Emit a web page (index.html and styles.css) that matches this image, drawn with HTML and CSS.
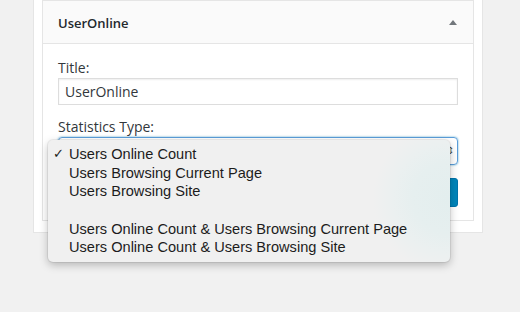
FILE: index.html
```html
<!DOCTYPE HTML>
<html>
<head>
<meta charset="utf-8">
<title>UserOnline widget</title>
<link rel="stylesheet" href="styles.css">
</head>

<body>
<div class="sidebar">
	<div class="widget">
		<div class="widget-top">
			<h3>UserOnline</h3>
			<span class="toggle"></span>
		</div>
		<div class="widget-inside">
			<label class="field-label">Title:</label>
			<div class="text-input">UserOnline</div>
			<label class="field-label stat-label">Statistics Type:</label>
			<div class="select-box"><span class="select-arrow">&#8661;</span></div>
			<div class="actions">
				<span class="save-btn"></span>
			</div>
		</div>
	</div>

	<ul class="dropdown">
		<li class="checked">Users Online Count</li>
		<li>Users Browsing Current Page</li>
		<li>Users Browsing Site</li>
		<li class="blank"></li>
		<li>Users Online Count &amp; Users Browsing Current Page</li>
		<li>Users Online Count &amp; Users Browsing Site</li>
	</ul>
</div>
</body>
</html>
```

FILE: styles.css
```css
* {margin:0; padding:0; box-sizing:border-box;}
li {list-style:none;}

body {background:#f1f1f1; font-family:"Open Sans", "Liberation Sans", sans-serif; color:#23282d; height:312px; overflow:hidden;}

.sidebar {position:relative; width:450px; margin-left:33px; background:#fff; border:1px solid #e5e5e5; border-top:0; padding:0 8px 11px 8px;}

.widget {border:1px solid #e5e5e5; background:#fff;}
.widget-top {height:43px; background:#fafafa; border-bottom:1px solid #e5e5e5; display:flex; align-items:center; justify-content:space-between; padding:0 16px 0 15px;}
.widget-top h3 {font-size:13px; font-weight:600; color:#23282d; margin-top:1px;}
.toggle {width:0; height:0; border-left:4px solid transparent; border-right:4px solid transparent; border-bottom:5px solid #72777c; margin-top:1px;}

.widget-inside {padding:14px 15px 13px 15px;}
.field-label {display:block; font-size:14px; line-height:19px; color:#32373c;}
.text-input {margin-top:1px; height:27px; border:1px solid #ddd; box-shadow:inset 0 1px 2px rgba(0,0,0,0.07); font-size:14px; line-height:25px; padding:0 6px; color:#32373c;}
.stat-label {margin-top:12px;}
.select-box {position:relative; margin-top:1px; height:28px; border:1px solid #5b9dd9; border-radius:4px; box-shadow:0 0 2px rgba(30,140,190,0.8);}
.select-arrow {position:absolute; right:3px; top:5px; font-size:10px; line-height:14px; color:#444;}
.actions {display:flex; justify-content:flex-end; margin-top:13px;}
.save-btn {display:block; width:70px; height:29px; background:#0085ba; border:1px solid #0073aa; border-radius:3px;}

.dropdown {position:absolute; left:14px; top:140px; width:402px; padding:5px 0; background:#f0f0f0 radial-gradient(circle at 400px 58px, #e3eeee 0, #e6efef 35px, #ebf0f0 55px, #f0f0f0 75px); border-radius:5px; box-shadow:0 3px 9px rgba(0,0,0,0.25), 0 0 0 1px rgba(0,0,0,0.06); font-family:"Liberation Sans", Arial, sans-serif; font-size:14.6px; color:#1c1c1c;}
.dropdown li {height:18.7px; line-height:18.7px; padding-left:21px; position:relative; white-space:nowrap;}
.dropdown li.checked::before {content:"\2713"; position:absolute; left:5px; top:0; font-size:13px; font-family:"DejaVu Sans", sans-serif; font-weight:bold;}
```
